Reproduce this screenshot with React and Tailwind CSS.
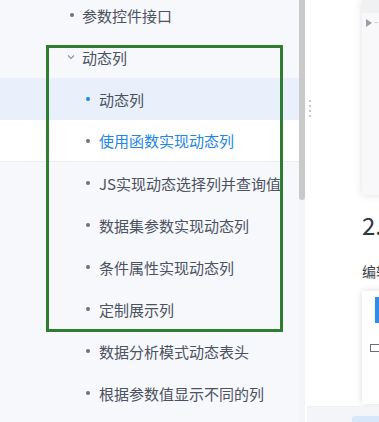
const font = { fontFamily: '"Noto Sans CJK SC", "Noto Sans", sans-serif' };

const items = [
  { label: "参数控件接口", level: 1 },
  { label: "动态列", level: 1, open: true },
  { label: "动态列", level: 2, active: true },
  { label: "使用函数实现动态列", level: 2, hover: true },
  { label: "JS实现动态选择列并查询值", level: 2 },
  { label: "数据集参数实现动态列", level: 2 },
  { label: "条件属性实现动态列", level: 2 },
  { label: "定制展示列", level: 2 },
  { label: "数据分析模式动态表头", level: 2 },
  { label: "根据参数值显示不同的列", level: 2 },
];

function NavRow({ item }) {
  const rowBg = item.active
    ? "bg-[#e9f0fb]"
    : item.hover
    ? "bg-white border-b border-[#eceef2]"
    : "";
  const textColor = item.hover ? "text-[#2385e6]" : "text-[#4b5260]";
  return (
    <div className={`flex items-center h-[42px] shrink-0 whitespace-nowrap ${rowBg}`}>
      <div className={item.level === 1 ? "w-[82px] flex justify-end pr-[8px]" : "w-[99px] flex justify-end pr-[9px]"}>
        {item.open ? (
          <svg width="8" height="6" viewBox="0 0 8 6" className="mr-[-1px]">
            <path d="M1 1.5 L4 4.5 L7 1.5" fill="none" stroke="#8a909a" strokeWidth="1.1" />
          </svg>
        ) : (
          <span className={`block w-[4px] h-[4px] rounded-full ${item.active ? "bg-[#1e88e5]" : "bg-[#6b7280]"}`} />
        )}
      </div>
      <span className={`text-[15px] leading-none ${textColor}`}>{item.label}</span>
    </div>
  );
}

export default function App() {
  return (
    <div className="relative flex w-[379px] h-[422px] overflow-hidden bg-white" style={font}>
      {/* sidebar */}
      <div className="w-[299px] shrink-0 bg-[#f7f8fc] overflow-hidden">
        <div className="flex flex-col mt-[-6px]">
          {items.map((it, i) => (
            <NavRow key={i} item={it} />
          ))}
        </div>
      </div>

      {/* scrollbar */}
      <div className="w-[6px] shrink-0 bg-[#f4f5f9]">
        <div className="h-[200px] bg-[#c9c9c9] rounded-b-[3px]" />
      </div>

      {/* main */}
      <div className="relative flex-1 bg-white">
        <div className="absolute left-[4px] top-[100px] flex flex-col gap-[3px]">
          <span className="block w-[2px] h-[2px] bg-[#c3c7cf]" />
          <span className="block w-[2px] h-[2px] bg-[#c3c7cf]" />
          <span className="block w-[2px] h-[2px] bg-[#c3c7cf]" />
          <span className="block w-[2px] h-[2px] bg-[#c3c7cf]" />
        </div>

        <div className="ml-[57px] flex flex-col">
          <div className="h-[195px] bg-[#f8f8fa] shadow-[0_0_9px_rgba(0,0,0,0.13)]">
            <div className="h-[13px] bg-[#f0f1f3]" />
            <div className="flex items-center pl-[4px] pt-[4px] gap-[2px]">
              <svg width="6" height="8" viewBox="0 0 6 8">
                <path d="M0 0 L6 4 L0 8 Z" fill="#9a9ea6" />
              </svg>
              <span className="block w-[4px] h-[1px] bg-[#d0d3d8]" />
              <span className="block w-[3px] h-[11px] bg-[#8ccde4]" />
            </div>
          </div>
          <div className="mt-[14px] text-[24px] leading-[32px] text-[#2d3646] whitespace-nowrap">2.</div>
          <div className="mt-[20px] text-[14px] leading-[20px] text-[#3a3f48] whitespace-nowrap">编辑</div>
          <div className="mt-[10px] h-[113px] bg-white shadow-[0_0_7px_rgba(0,0,0,0.14)] flex flex-col">
            <div className="ml-[13px] mt-[6px] w-[6px] h-[26px] bg-[#2d8cf0]" />
            <div className="ml-[8px] mt-[21px] w-[10px] h-[8px] border border-[#6b6f76]" />
          </div>
        </div>

        <div className="absolute left-[2px] right-0 bottom-0 h-[16px] bg-[#f3f5f8] border-t border-[#eef0f3]">
          <div className="ml-[45px] mt-[9px] w-[40px] h-[10px] rounded-[3px] bg-[#d9e7fb]" />
        </div>
      </div>

      {/* annotation box */}
      <div className="absolute left-[46px] top-[45px] w-[237px] h-[287px] border-[3px] border-[#2f7d31] pointer-events-none" />
    </div>
  );
}
